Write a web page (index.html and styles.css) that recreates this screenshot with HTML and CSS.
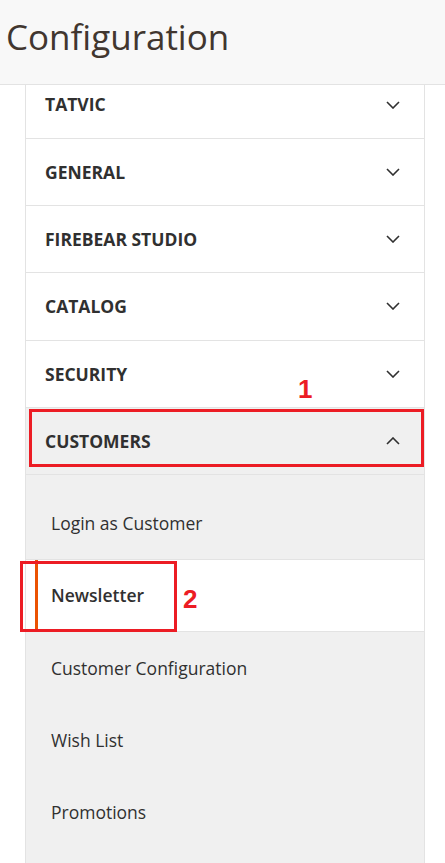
FILE: index.html
```html
<!DOCTYPE html>
<html lang="en">
<head>
<meta charset="utf-8">
<title>Configuration</title>
<link rel="stylesheet" href="styles.css">
</head>
<body>
<header class="page-header">
  <h1 class="page-title">Configuration</h1>
</header>
<main class="panel">
  <div class="section section-clipped">
    <span class="section-name">TATVIC</span>
    <svg class="chev" width="14" height="8" viewBox="0 0 14 8"><path d="M1 1l6 6 6-6" fill="none" stroke="#303030" stroke-width="1.6"/></svg>
  </div>
  <div class="section">
    <span class="section-name">GENERAL</span>
    <svg class="chev" width="14" height="8" viewBox="0 0 14 8"><path d="M1 1l6 6 6-6" fill="none" stroke="#303030" stroke-width="1.6"/></svg>
  </div>
  <div class="section">
    <span class="section-name">FIREBEAR STUDIO</span>
    <svg class="chev" width="14" height="8" viewBox="0 0 14 8"><path d="M1 1l6 6 6-6" fill="none" stroke="#303030" stroke-width="1.6"/></svg>
  </div>
  <div class="section">
    <span class="section-name">CATALOG</span>
    <svg class="chev" width="14" height="8" viewBox="0 0 14 8"><path d="M1 1l6 6 6-6" fill="none" stroke="#303030" stroke-width="1.6"/></svg>
  </div>
  <div class="section">
    <span class="section-name">SECURITY</span>
    <svg class="chev" width="14" height="8" viewBox="0 0 14 8"><path d="M1 1l6 6 6-6" fill="none" stroke="#303030" stroke-width="1.6"/></svg>
  </div>
  <div class="section section-open">
    <span class="section-name">CUSTOMERS</span>
    <svg class="chev" width="14" height="8" viewBox="0 0 14 8"><path d="M1 7l6-6 6 6" fill="none" stroke="#303030" stroke-width="1.6"/></svg>
  </div>
  <ul class="subnav">
    <li class="subnav-item"><span class="subnav-link">Login as Customer</span></li>
    <li class="subnav-item subnav-item-active"><span class="subnav-link">Newsletter</span></li>
    <li class="subnav-item"><span class="subnav-link">Customer Configuration</span></li>
    <li class="subnav-item"><span class="subnav-link">Wish List</span></li>
    <li class="subnav-item"><span class="subnav-link">Promotions</span></li>
  </ul>
</main>
<div class="mark mark-box-1"></div>
<div class="mark mark-num mark-num-1">1</div>
<div class="mark mark-box-2"></div>
<div class="mark mark-num mark-num-2">2</div>
</body>
</html>
```
FILE: styles.css
```css
html, body {
  margin: 0;
  padding: 0;
  background: #ffffff;
}
body {
  position: relative;
  font-family: "Open Sans", "Noto Sans", sans-serif;
  color: #303030;
  width: 445px;
  height: 863px;
  overflow: hidden;
}
.page-header {
  height: 85px;
  box-sizing: border-box;
  background: #f8f8f8;
  border-bottom: 1px solid #e3e3e3;
  padding-left: 6px;
  padding-top: 13px;
}
.page-title {
  margin: 0;
  font-size: 35px;
  font-weight: 400;
  line-height: 48px;
  color: #41362f;
}
.panel {
  margin-left: 25px;
  width: 400px;
  box-sizing: border-box;
  border-left: 1px solid #e3e3e3;
  border-right: 1px solid #e3e3e3;
  min-height: 778px;
  background: #f0f0f0;
}
.section {
  display: flex;
  align-items: center;
  justify-content: space-between;
  height: 67.2px;
  box-sizing: border-box;
  padding: 0 24px 0 19px;
  border-bottom: 1px solid #e3e3e3;
  background: #ffffff;
}
.section-clipped {
  height: 54px;
  align-items: flex-start;
  padding-top: 7px;
}
.section-clipped .chev {
  margin-top: 9px;
}
.section-open {
  background: #f0f0f0;
}
.section-name {
  font-size: 17.5px;
  font-weight: 700;
  line-height: 24px;
  color: #303030;
}
.chev {
  display: block;
}
.subnav {
  list-style: none;
  margin: 0;
  padding: 12px 0 0 0;
  background: #f0f0f0;
}
.subnav-item {
  height: 72px;
  display: flex;
  align-items: center;
  padding-left: 25px;
  font-size: 17.5px;
  line-height: 24px;
  color: #303030;
}
.subnav-item-active {
  height: 73px;
  box-sizing: border-box;
  background: #ffffff;
  border-top: 1px solid #e3e3e3;
  border-bottom: 1px solid #e3e3e3;
  padding-left: 9px;
  align-items: stretch;
}
.subnav-item-active .subnav-link {
  display: flex;
  align-items: center;
  border-left: 3px solid #eb5202;
  padding-left: 13px;
  font-weight: 600;
}
.mark {
  position: absolute;
}
.mark-box-1 {
  left: 29px;
  top: 409px;
  width: 395px;
  height: 58px;
  box-sizing: border-box;
  border: 3px solid #ec1c24;
}
.mark-box-2 {
  left: 20px;
  top: 561px;
  width: 157px;
  height: 71px;
  box-sizing: border-box;
  border: 3px solid #ec1c24;
}
.mark-num {
  font-family: "Liberation Sans", Arial, sans-serif;
  font-weight: 700;
  font-size: 26px;
  line-height: 26px;
  color: #ec1c24;
}
.mark-num-1 {
  left: 298px;
  top: 376px;
}
.mark-num-2 {
  left: 183px;
  top: 586px;
}
```
